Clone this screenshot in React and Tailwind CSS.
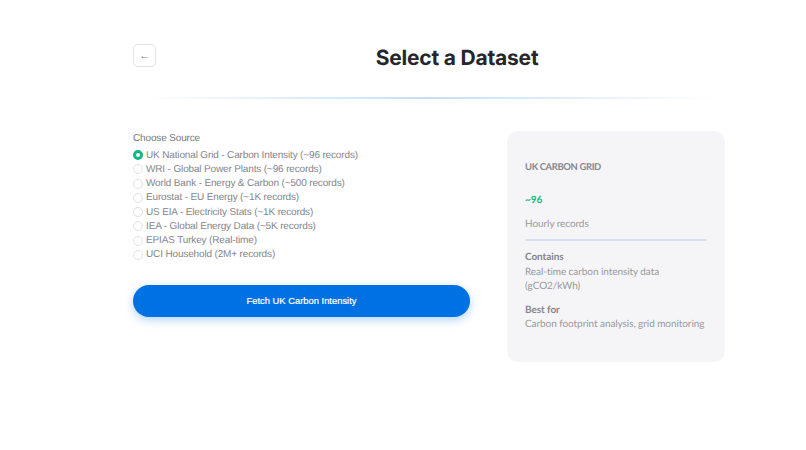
const sources = [
    "UK National Grid - Carbon Intensity (~96 records)",
    "WRI - Global Power Plants (~96 records)",
    "World Bank - Energy & Carbon (~500 records)",
    "Eurostat - EU Energy (~1K records)",
    "US EIA - Electricity Stats (~1K records)",
    "IEA - Global Energy Data (~5K records)",
    "EPIAS Turkey (Real-time)",
    "UCI Household (2M+ records)",
];

const App = () => {
    return (
        <section className="w-[806px] h-[450px] bg-white overflow-hidden font-['Liberation_Sans',sans-serif] [text-rendering:geometricPrecision]">
            <div className="w-[592px] ml-[133px] pt-[44px]">
                <div className="flex items-start h-[53px]">
                    <button className="w-[23px] h-[23px] shrink-0 flex items-center justify-center pb-px border border-[#e2e2e6] rounded-[5px] bg-white text-[#85858a] text-[11px] leading-none">
                        ←
                    </button>
                    <h1 className="w-[602px] shrink-0 mt-px text-center text-[21px] leading-[28px] font-bold tracking-[-0.2px] text-[#25272b] font-['Inter',sans-serif]">
                        Select a Dataset
                    </h1>
                </div>

                <div className="h-[2px] ml-[8px] w-[576px] bg-gradient-to-r from-transparent via-[#c5ddf8] to-transparent"></div>

                <div className="flex gap-[37px] mt-[32px]">
                    <div className="w-[337px]">
                        <p className="mt-px text-[10px] leading-[13px] tracking-[-0.15px] text-[#77777c]">Choose Source</p>
                        <div className="flex flex-col mt-[3px]">
                            {sources.map((source, i) => (
                                <label key={source} className="flex items-center h-[14.25px] gap-[3px] text-[10px] tracking-[-0.15px] text-[#85858a] whitespace-nowrap">
                                    {i === 0 ? (
                                        <span className="w-[10px] h-[10px] rounded-full border-[3px] border-[#10b981] bg-white"></span>
                                    ) : (
                                        <span className="w-[10px] h-[10px] rounded-full border border-[#e2e2e4] bg-white"></span>
                                    )}
                                    {source}
                                </label>
                            ))}
                        </div>
                        <button className="w-[337px] h-[32px] mt-[23px] rounded-full bg-[#0071e3] text-white text-[9.4px] [-webkit-text-stroke:0.2px_white] shadow-[0_3px_10px_rgba(0,113,227,0.3)]">
                            Fetch UK Carbon Intensity
                        </button>
                    </div>

                    <div className="w-[218px] h-[231px] bg-[#f5f5f7] rounded-[11px] px-[18px] pt-[30px] font-['Lato',sans-serif] text-[10px] tracking-[-0.07px]">
                        <h3 className="leading-[14px] text-[9.5px] tracking-[-0.4px] font-bold text-[#85858a]">UK CARBON GRID</h3>
                        <p className="mt-[18px] leading-[14px] font-bold text-[#10b981]">~96</p>
                        <p className="mt-[10px] leading-[14px] text-[#98989d]">Hourly records</p>
                        <div className="h-[1.5px] mt-[8px] bg-[#d9dcf3]"></div>
                        <p className="mt-[9px] leading-[15px] font-bold text-[#85858a]">Contains</p>
                        <p className="leading-[14.5px] text-[#98989d]">Real-time carbon intensity data (gCO2/kWh)</p>
                        <p className="mt-[9px] leading-[14px] font-bold text-[#85858a]">Best for</p>
                        <p className="leading-[14.5px] text-[#98989d] whitespace-nowrap">Carbon footprint analysis, grid monitoring</p>
                    </div>
                </div>
            </div>
        </section>
    );
};

export default App;
